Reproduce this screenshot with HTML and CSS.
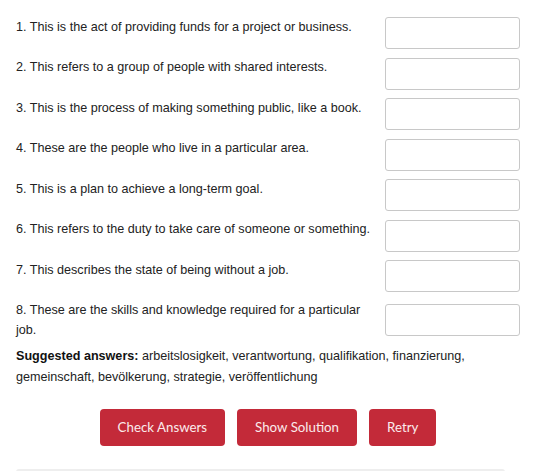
FILE: index.html
```html
<!DOCTYPE html>
<html lang="en">
<head>
<meta charset="utf-8">
<title>Exercise</title>
<link rel="stylesheet" href="styles.css">
</head>
<body>
<div class="exercise">
  <div class="questions">
    <div class="row"><p class="q">1. This is the act of providing funds for a project or business.</p><input class="answer" type="text"></div>
    <div class="row"><p class="q">2. This refers to a group of people with shared interests.</p><input class="answer" type="text"></div>
    <div class="row"><p class="q">3. This is the process of making something public, like a book.</p><input class="answer" type="text"></div>
    <div class="row"><p class="q">4. These are the people who live in a particular area.</p><input class="answer" type="text"></div>
    <div class="row"><p class="q">5. This is a plan to achieve a long-term goal.</p><input class="answer" type="text"></div>
    <div class="row"><p class="q">6. This refers to the duty to take care of someone or something.</p><input class="answer" type="text"></div>
    <div class="row"><p class="q">7. This describes the state of being without a job.</p><input class="answer" type="text"></div>
    <div class="row"><p class="q">8. These are the skills and knowledge required for a particular job.</p><input class="answer" type="text"></div>
  </div>
  <p class="suggested"><strong>Suggested answers:</strong> arbeitslosigkeit, verantwortung, qualifikation, finanzierung, gemeinschaft, bevölkerung, strategie, veröffentlichung</p>
  <div class="actions">
    <button class="btn" type="button">Check Answers</button>
    <button class="btn" type="button">Show Solution</button>
    <button class="btn" type="button">Retry</button>
  </div>
  <div class="footer-bar"></div>
</div>
</body>
</html>
```
FILE: styles.css
```css
html, body {
  margin: 0;
  padding: 0;
  background: #fff;
}
body {
  font-family: "Liberation Sans", Arial, sans-serif;
  font-size: 12.6px;
  color: #222;
}
.exercise {
  padding: 17px 18px 0 16px;
}
.questions {
  display: flex;
  flex-direction: column;
  gap: 8.5px;
}
.row {
  display: flex;
  align-items: center;
  gap: 14px;
}
.q {
  flex: 1;
  margin: 0;
  min-height: 32px;
  line-height: 20px;
  margin-top: -1px;
}
.answer {
  flex: none;
  width: 135px;
  height: 32px;
  box-sizing: border-box;
  border: 1px solid #c8c8c8;
  border-radius: 3px;
  margin: 0;
  background: #fff;
}
.suggested {
  margin: 6px 0 0;
  line-height: 21px;
}
.suggested strong {
  font-weight: bold;
  color: #111;
}
.actions {
  display: flex;
  justify-content: center;
  gap: 12px;
  margin-top: 21px;
}
.btn {
  height: 37px;
  padding: 0 18px;
  border: none;
  border-radius: 4px;
  background: #c32a39;
  color: #fbeaec;
  font-family: Lato, "Open Sans", sans-serif;
  font-size: 13.3px;
}
.footer-bar {
  margin: 23px 15px 0 0;
  height: 6px;
  background: #eeeeee;
  border-radius: 3px 3px 0 0;
}
```
